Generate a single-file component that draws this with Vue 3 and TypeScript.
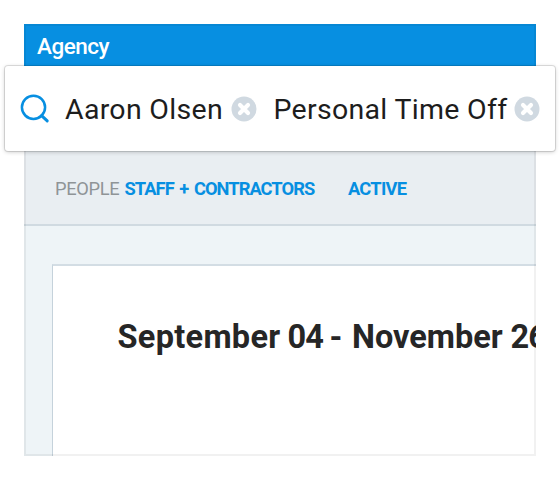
<script setup lang="ts">
import { ref } from 'vue'

const tokens = ref<string[]>(['Aaron Olsen', 'Personal Time Off'])

function removeToken(index: number): void {
  tokens.value.splice(index, 1)
}
</script>

<template>
  <main class="page">
    <section class="window">
      <header class="topbar"><span class="brand">Agency</span></header>
      <nav class="filters">
        <span class="label">PEOPLE</span>
        <a class="staff">STAFF + CONTRACTORS</a>
        <a class="active">ACTIVE</a>
      </nav>
      <div class="content">
        <article class="card">
          <h1><span class="from">September</span><span class="day">04</span><span class="dash">-</span><span class="month">November</span><span class="end">26</span></h1>
        </article>
      </div>
    </section>
    <div class="search">
      <svg class="lens" width="30" height="30" viewBox="0 0 30 30">
        <circle cx="13.5" cy="13.3" r="11.6" />
        <path d="M21.6 21.6L27.2 26.9" />
      </svg>
      <div v-for="(token, i) in tokens" :key="token" class="token" :class="'token-' + i">
        <span class="token-text">{{ token }}</span>
        <svg class="remove" width="26" height="26" viewBox="0 0 26 26" @click="removeToken(i)">
          <circle cx="13" cy="13" r="12.5" />
          <path d="M9 9L17 17M17 9L9 17" />
        </svg>
      </div>
    </div>
  </main>
</template>

<style>
body {
  background: #fff;
}
</style>

<style scoped>
.page {
  position: relative;
  box-sizing: border-box;
  width: 560px;
  height: 480px;
  padding: 24px;
  overflow: hidden;
  font-family: Roboto, "Liberation Sans", sans-serif;
  white-space: nowrap;
}
.window {
  position: relative;
  display: flex;
  flex-direction: column;
  height: 432px;
  overflow: hidden;
  background: #eef4f7;
}
.window::after {
  content: "";
  position: absolute;
  inset: 0;
  border: 2px solid rgba(0, 0, 0, 0.055);
  pointer-events: none;
}
.topbar {
  flex: none;
  box-sizing: border-box;
  height: 42px;
  padding: 8px 0 0 13px;
  background: #078fe1;
  color: #fff;
}
.brand {
  display: block;
  font-size: 22.5px;
  line-height: 28px;
  font-weight: 500;
  letter-spacing: -0.5px;
}
.filters {
  flex: none;
  box-sizing: border-box;
  display: flex;
  height: 159.5px;
  padding: 111px 0 0 31px;
  border-bottom: 2px solid #d0dae1;
  background: #e9eef2;
  font-size: 18.3px;
  line-height: 24px;
}
.filters a {
  color: #078fe1;
  font-weight: 700;
}
.label {
  width: 69.5px;
  color: #8f9497;
  letter-spacing: -0.35px;
}
.filters .staff {
  width: 223.5px;
  letter-spacing: -0.95px;
  word-spacing: 2px;
}
.filters .active {
  letter-spacing: -0.75px;
}
.content {
  flex: 1;
  padding: 38.5px 0 0 28px;
}
.card {
  height: 190px;
  border-top: 2px solid #d3dde4;
  border-left: 1px solid #c5d2db;
  background: #fff;
}
h1 {
  display: flex;
  margin: 0;
  padding: 52px 0 0 64.5px;
  color: #262626;
  font-size: 32.5px;
  line-height: 38px;
  font-weight: 700;
}
h1 span {
  flex: none;
}
.from {
  width: 170px;
  letter-spacing: 0.3px;
}
.day {
  width: 42px;
  letter-spacing: -0.8px;
}
.dash {
  width: 22.5px;
}
.month {
  width: 158.5px;
}
.end {
  letter-spacing: -1px;
}
.search {
  position: absolute;
  top: 66px;
  left: 5px;
  box-sizing: border-box;
  display: flex;
  align-items: center;
  width: 550px;
  height: 85px;
  padding-left: 15px;
  border-radius: 3px;
  background: #fff;
  box-shadow: 0 0 0 1px rgba(0, 0, 0, 0.11), 0 1px 4px rgba(0, 0, 0, 0.22);
}
.lens {
  flex: none;
  fill: none;
  stroke: #078fe1;
  stroke-width: 2.5;
  stroke-linecap: round;
}
.lens path {
  stroke-width: 3;
}
.token {
  display: flex;
  align-items: center;
}
.token-text {
  flex: none;
  padding-top: 2px;
  color: #1d1d1d;
  font-size: 28.5px;
  line-height: 34px;
  letter-spacing: 0.3px;
}
.token-0 {
  width: 208.5px;
  margin-left: 15px;
}
.token-0 .token-text {
  width: 166px;
}
.token-1 .token-text {
  width: 240px;
}
.remove {
  flex: none;
  fill: #d0d9e1;
}
.remove path {
  stroke: #fff;
  stroke-width: 4.2;
  stroke-linecap: round;
}
</style>
